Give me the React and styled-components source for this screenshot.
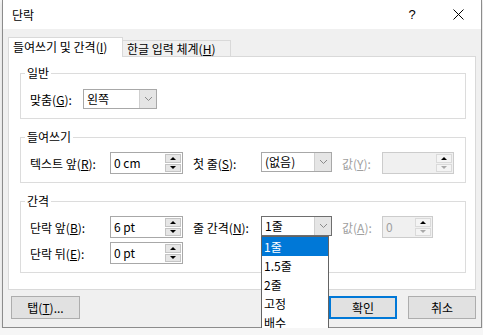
import React from "react";
import styled, { createGlobalStyle } from "styled-components";

const GlobalStyle = createGlobalStyle`
  body {
    margin: 0;
    background: #f6f6f6;
    font-family: "Noto Sans CJK KR", "Noto Sans", sans-serif;
    font-size: 12px;
    color: #000;
  }
  * { box-sizing: border-box; }
`;

const Dialog = styled.div`
  width: 480px;
  height: 328px;
  margin-left: 2px;
  border: 1px solid #8c8c8c;
  border-top: none;
  background: #f0f0f0;
  display: flex;
  flex-direction: column;
  box-shadow: 0 2px 5px rgba(0, 0, 0, 0.12);
`;

const TitleBar = styled.div`
  height: 29px;
  background: #fff;
  display: flex;
  align-items: center;
  padding-left: 9px;
  font-size: 12px;

  .title {
    flex: 1;
  }
`;

const CaptionButton = styled.div`
  width: 46px;
  height: 29px;
  display: flex;
  align-items: center;
  justify-content: center;
  font-family: "Liberation Sans", sans-serif;
  font-size: 13px;
`;

const Body = styled.div`
  flex: 1;
  padding: 8px 5px 0 5px;
  display: flex;
  flex-direction: column;
`;

const TabRow = styled.div`
  display: flex;
  align-items: flex-end;
  height: 20px;
  margin-bottom: -1px;
  position: relative;
  z-index: 1;
`;

const Tab = styled.div`
  height: ${(p) => (p.$active ? "20px" : "16px")};
  margin-bottom: ${(p) => (p.$active ? "0" : "1px")};
  width: ${(p) => p.$w}px;
  background: ${(p) => (p.$active ? "#fff" : "#f0f0f0")};
  border: 1px solid #d9d9d9;
  border-bottom: none;
  border-left: ${(p) => (p.$active ? "1px solid #d9d9d9" : "none")};
  padding-left: 4px;
  line-height: ${(p) => (p.$active ? "18px" : "15px")};
  white-space: nowrap;
`;

const Panel = styled.div`
  background: #fff;
  border: 1px solid #d9d9d9;
  padding: 8px 9px 16px 11px;
  display: flex;
  flex-direction: column;
  gap: 10px;
`;

const Group = styled.fieldset`
  margin: 0;
  border: 1px solid #dcdcdc;
  padding: 7px 10px 8px 9px;
  min-width: 0;

  legend {
    padding: 0 2px;
    margin-left: -5px;
    line-height: 16px;
  }
`;

const Rows = styled.div`
  display: flex;
  flex-direction: column;
  gap: 4px;
`;

const Row = styled.div`
  display: flex;
  align-items: center;
  height: 22px;
`;

const Label = styled.div`
  width: ${(p) => p.$w}px;
  flex: none;
  white-space: nowrap;
  color: ${(p) => (p.$disabled ? "#a0a0a0" : "#000")};
  margin-left: ${(p) => p.$gap || 0}px;
`;

const SpinBox = styled.div`
  width: ${(p) => p.$w}px;
  height: 22px;
  flex: none;
  display: flex;
  border: 1px solid ${(p) => (p.$disabled ? "#cccccc" : "#a8a8a8")};
  background: ${(p) => (p.$disabled ? "#f0f0f0" : "#fff")};
  color: ${(p) => (p.$disabled ? "#a0a0a0" : "#000")};

  .value {
    flex: 1;
    padding-left: 3px;
    line-height: 20px;
  }
`;

const SpinButtons = styled.div`
  width: 17px;
  display: flex;
  flex-direction: column;
  padding: 1px 1px 1px 0;
  gap: 1px;
`;

const SpinButton = styled.div`
  flex: 1;
  background: ${(p) => (p.$disabled ? "#f4f4f4" : "#e6e6e6")};
  border: 1px solid ${(p) => (p.$disabled ? "#dadada" : "#c4c4c4")};
  display: flex;
  align-items: center;
  justify-content: center;

  &::after {
    content: "";
    width: 0;
    height: 0;
    border-left: 3px solid transparent;
    border-right: 3px solid transparent;
    ${(p) =>
      p.$down
        ? `border-top: 3px solid ${p.$dim ? "#a8a8a8" : "#000"};`
        : `border-bottom: 3px solid ${p.$dim ? "#a8a8a8" : "#000"};`}
  }
`;

const SelectWrap = styled.div`
  position: relative;
  flex: none;
  align-self: flex-start;
  margin-left: ${(p) => p.$gap || 0}px;
`;

const Select = styled.div`
  width: ${(p) => p.$w}px;
  height: 20px;
  display: flex;
  border: 1px solid ${(p) => (p.$focused ? "#6e6e6e" : "#a8a8a8")};
  background: #fff;

  .value {
    flex: 1;
    padding-left: 3px;
    line-height: 18px;
  }
`;

const DropButton = styled.div`
  width: 17px;
  background: #e5e5e5;
  border-left: 1px solid #cfcfcf;
  display: flex;
  align-items: center;
  justify-content: center;
`;

const DropList = styled.div`
  position: absolute;
  left: 0;
  top: 100%;
  width: 68px;
  border: 1px solid #646464;
  background: #fff;
  z-index: 5;
`;

const DropItem = styled.div`
  height: 19px;
  line-height: 19px;
  padding-left: 2px;
  background: ${(p) => (p.$selected ? "#0078d7" : "#fff")};
  color: ${(p) => (p.$selected ? "#fff" : "#000")};
`;

const ButtonRow = styled.div`
  display: flex;
  margin-top: 6px;
  padding-left: 3px;

  .spacer {
    flex: 1;
  }
`;

const Button = styled.div`
  width: ${(p) => p.$w}px;
  height: 23px;
  margin-left: ${(p) => p.$gap || 0}px;
  background: #e1e1e1;
  border: 1px solid ${(p) => (p.$default ? "#0078d7" : "#adadad")};
  box-shadow: ${(p) => (p.$default ? "inset 0 0 0 1px #0078d7" : "none")};
  display: flex;
  align-items: center;
  justify-content: center;
`;

const Chevron = () => (
  <svg width="9" height="6" viewBox="0 0 9 6">
    <path d="M1 1 L4.5 4.5 L8 1" fill="none" stroke="#8a8a8a" strokeWidth="1" />
  </svg>
);

const Spin = ({ disabled, downDim, upDim }) => (
  <SpinButtons>
    <SpinButton $disabled={disabled} $dim={upDim} />
    <SpinButton $disabled={disabled} $down $dim={downDim} />
  </SpinButtons>
);

const lineOptions = ["1줄", "1.5줄", "2줄", "고정", "배수"];

export default function App() {
  return (
    <>
      <GlobalStyle />
      <Dialog>
        <TitleBar>
          <span className="title">단락</span>
          <CaptionButton>?</CaptionButton>
          <CaptionButton>
            <svg width="11" height="11" viewBox="0 0 11 11">
              <path d="M0.5 0.5 L10.5 10.5 M10.5 0.5 L0.5 10.5" stroke="#000" strokeWidth="1" />
            </svg>
          </CaptionButton>
        </TitleBar>
        <Body>
          <TabRow>
            <Tab $active $w={115}>
              들여쓰기 및 간격(<u>I</u>)
            </Tab>
            <Tab $w={108}>
              한글 입력 체계(<u>H</u>)
            </Tab>
          </TabRow>
          <Panel>
            <Group>
              <legend>일반</legend>
              <Row>
                <Label $w={53}>
                  맞춤(<u>G</u>):
                </Label>
                <Select $w={74}>
                  <span className="value">왼쪽</span>
                  <DropButton>
                    <Chevron />
                  </DropButton>
                </Select>
              </Row>
            </Group>
            <Group>
              <legend>들여쓰기</legend>
              <Row>
                <Label $w={80}>
                  텍스트 앞(<u>R</u>):
                </Label>
                <SpinBox $w={73}>
                  <span className="value">0 cm</span>
                  <Spin />
                </SpinBox>
                <Label $w={68} $gap={10}>
                  첫 줄(<u>S</u>):
                </Label>
                <SelectWrap>
                  <Select $w={71}>
                    <span className="value">(없음)</span>
                    <DropButton>
                      <Chevron />
                    </DropButton>
                  </Select>
                </SelectWrap>
                <Label $w={40} $gap={10} $disabled>
                  값(<u>Y</u>):
                </Label>
                <SpinBox $w={72} $disabled>
                  <span className="value"></span>
                  <Spin disabled downDim />
                </SpinBox>
              </Row>
            </Group>
            <Group>
              <legend>간격</legend>
              <Rows>
                <Row>
                  <Label $w={80}>
                    단락 앞(<u>B</u>):
                  </Label>
                  <SpinBox $w={73}>
                    <span className="value">6 pt</span>
                    <Spin />
                  </SpinBox>
                  <Label $w={68} $gap={10}>
                    줄 간격(<u>N</u>):
                  </Label>
                  <SelectWrap>
                    <Select $w={71} $focused>
                      <span className="value">1줄</span>
                      <DropButton>
                        <Chevron />
                      </DropButton>
                    </Select>
                    <DropList>
                      {lineOptions.map((o, i) => (
                        <DropItem key={o} $selected={i === 0}>
                          {o}
                        </DropItem>
                      ))}
                    </DropList>
                  </SelectWrap>
                  <Label $w={40} $gap={10} $disabled>
                    값(<u>A</u>):
                  </Label>
                  <SpinBox $w={51} $disabled>
                    <span className="value">0</span>
                    <Spin disabled downDim />
                  </SpinBox>
                </Row>
                <Row>
                  <Label $w={80}>
                    단락 뒤(<u>E</u>):
                  </Label>
                  <SpinBox $w={73}>
                    <span className="value">0 pt</span>
                    <Spin />
                  </SpinBox>
                </Row>
              </Rows>
            </Group>
          </Panel>
          <ButtonRow>
            <Button $w={69}>
              탭(<u>T</u>)...
            </Button>
            <span className="spacer" />
            <Button $w={68} $default>
              확인
            </Button>
            <Button $w={68} $gap={11}>
              취소
            </Button>
          </ButtonRow>
        </Body>
      </Dialog>
    </>
  );
}
